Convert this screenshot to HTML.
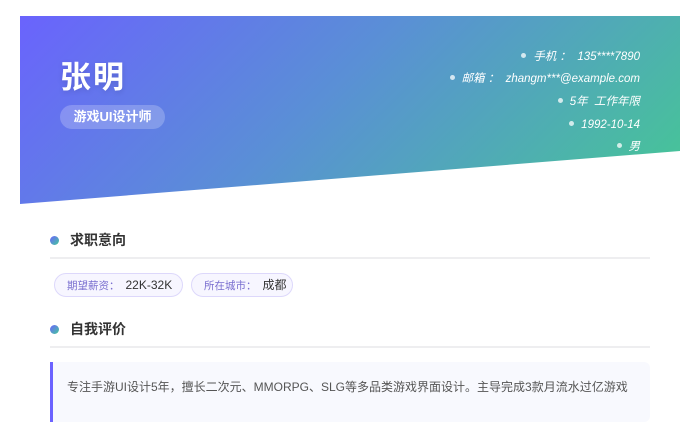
<!DOCTYPE html>
<html><head><meta charset="utf-8"><style>
*{margin:0;padding:0;box-sizing:border-box}
body{width:700px;height:400px;overflow:hidden;background:#fff;font-family:"Liberation Sans","Noto Sans CJK SC",sans-serif;position:relative}
.hd{position:absolute;left:20px;top:16px;width:660px;height:188px;background:linear-gradient(135deg,#6a63fd 0%,#5a8fd6 45%,#45c893 100%);clip-path:polygon(0 0,100% 0,100% 135px,0 188px)}
.name{position:absolute;left:60px;top:52px;font-size:31px;font-weight:bold;color:#fff;letter-spacing:2px;text-shadow:0 2px 6px rgba(0,0,0,.12)}
.tag{position:absolute;left:60px;top:105px;height:24px;width:105px;border-radius:12px;background:rgba(255,255,255,.22);color:#fff;font-size:13px;font-weight:bold;line-height:24px;text-align:center}
.ct{position:absolute;right:60px;color:#fff;font-size:11.5px;font-style:italic;white-space:nowrap;line-height:14px}
.ct:before{content:"";display:inline-block;width:5px;height:5px;border-radius:50%;background:rgba(255,255,255,.75);margin-right:7px;vertical-align:2px}
.sec{position:absolute;left:50px;width:600px;height:21px;border-bottom:2px solid #eeeef0}
.sec i{position:absolute;left:0;top:-2px;width:9px;height:9px;border-radius:50%;background:linear-gradient(135deg,#6c63ff,#43c99a)}
.sec b{position:absolute;left:20px;top:-8px;font-size:14px;color:#333}
.pill{position:absolute;top:273px;height:24px;border:1px solid #ddd8fb;background:#f7f6ff;border-radius:12px;font-size:12px;line-height:22px;padding-left:12px;color:#333}
.pill span{color:#7a6fd0;font-size:10.5px;margin-right:6px}
.box{position:absolute;left:50px;top:362px;width:600px;height:60px;background:#f8f9fe;border-left:3px solid #6c63ff;border-radius:0 6px 6px 0;font-size:12px;color:#555;padding:16px 0 0 14px;white-space:nowrap;overflow:hidden}
</style></head><body>
<div class="hd"></div>
<div class="name">张明</div>
<div class="tag">游戏UI设计师</div>
<div class="ct" style="top:50px">手机 ：&nbsp; 135****7890</div>
<div class="ct" style="top:72px">邮箱 ：&nbsp; zhangm***@example.com</div>
<div class="ct" style="top:95px">5年 &nbsp;工作年限</div>
<div class="ct" style="top:118px">1992-10-14</div>
<div class="ct" style="top:140px">男</div>
<div class="sec" style="top:238px"><i></i><b>求职意向</b></div>
<div class="pill" style="left:54px;width:129px"><span>期望薪资：</span>22K-32K</div>
<div class="pill" style="left:191px;width:102px"><span>所在城市：</span>成都</div>
<div class="sec" style="top:327px"><i></i><b>自我评价</b></div>
<div class="box">专注手游UI设计5年，擅长二次元、MMORPG、SLG等多品类游戏界面设计。主导完成3款月流水过亿游戏</div>
</body></html>
